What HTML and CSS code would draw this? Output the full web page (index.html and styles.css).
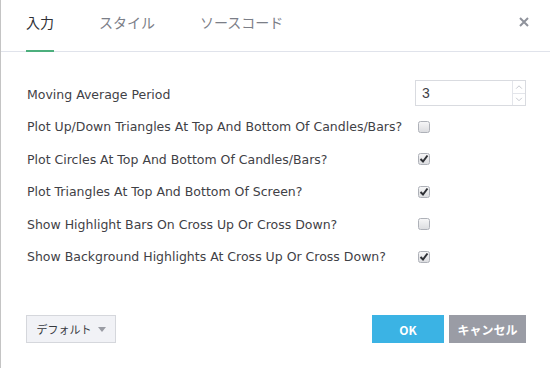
FILE: index.html
```html
<!DOCTYPE html>
<html lang="ja">
<head>
  <meta charset="UTF-8" />
  <title>入力</title>
  <link rel="stylesheet" href="styles.css">
</head>
<body>
  <div class="dialog">
    <div class="tabs">
      <div class="tab active">入力</div>
      <div class="tab">スタイル</div>
      <div class="tab">ソースコード</div>
      <svg class="close" width="10" height="10" viewBox="0 0 10 10">
        <path d="M1 1 L9 9 M9 1 L1 9" stroke="#8f929b" stroke-width="2" fill="none"/>
      </svg>
    </div>

    <div class="props">
      <div class="label">Moving Average Period</div>
      <div class="spin">
        <span class="spin-value">3</span>
        <span class="spin-arrows">
          <svg width="12" height="12" viewBox="0 0 12 12"><path d="M3 8 L6 5 L9 8" stroke="#c3c6cd" fill="none"/></svg>
          <svg width="12" height="12" viewBox="0 0 12 12"><path d="M3 4 L6 7 L9 4" stroke="#c3c6cd" fill="none"/></svg>
        </span>
      </div>

      <div class="label">Plot Up/Down Triangles At Top And Bottom Of Candles/Bars?</div>
      <div><span class="check"></span></div>

      <div class="label">Plot Circles At Top And Bottom Of Candles/Bars?</div>
      <div><span class="check on"><svg width="10" height="10" viewBox="0 0 10 10"><path d="M1.5 5 L4 7.5 L8.5 1.5" stroke="#2f3136" stroke-width="2" fill="none"/></svg></span></div>

      <div class="label">Plot Triangles At Top And Bottom Of Screen?</div>
      <div><span class="check on"><svg width="10" height="10" viewBox="0 0 10 10"><path d="M1.5 5 L4 7.5 L8.5 1.5" stroke="#2f3136" stroke-width="2" fill="none"/></svg></span></div>

      <div class="label">Show Highlight Bars On Cross Up Or Cross Down?</div>
      <div><span class="check"></span></div>

      <div class="label">Show Background Highlights At Cross Up Or Cross Down?</div>
      <div><span class="check on"><svg width="10" height="10" viewBox="0 0 10 10"><path d="M1.5 5 L4 7.5 L8.5 1.5" stroke="#2f3136" stroke-width="2" fill="none"/></svg></span></div>
    </div>

    <div class="footer">
      <button class="btn-default">デフォルト <span class="caret"></span></button>
      <div class="actions">
        <button class="btn-ok">OK</button>
        <button class="btn-cancel">キャンセル</button>
      </div>
    </div>
  </div>
</body>
</html>
```

FILE: styles.css
```css
body {
  margin: 0;
  background: #ffffff;
  font-family: "DejaVu Sans", Tahoma, sans-serif;
}

.dialog {
  width: 549px;
  height: 368px;
  border-left: 1px solid #c4c4c4;
  display: flex;
  flex-direction: column;
}

.tabs {
  height: 51px;
  border-bottom: 1px solid #e0e3eb;
  display: flex;
  align-items: stretch;
  padding-left: 25px;
  gap: 45px;
  position: relative;
}

.tab {
  font-family: "Noto Sans CJK JP", sans-serif;
  font-size: 14px;
  color: #7b7e87;
  display: flex;
  align-items: center;
  padding-bottom: 6px;
  box-sizing: border-box;
  border-bottom: 2px solid transparent;
  margin-bottom: -1px;
}

.tab.active {
  color: #2f3136;
  border-bottom-color: #4caf7d;
}

.close {
  position: absolute;
  right: 21px;
  top: 17px;
}

.props {
  display: grid;
  grid-template-columns: 388px 111px;
  grid-auto-rows: 32.5px;
  align-items: center;
  padding: 26px 0 0 26px;
}

.label {
  font-size: 12.5px;
  color: #3f4146;
}

.spin {
  height: 26px;
  box-sizing: border-box;
  border: 1px solid #d9dbe0;
  display: flex;
  margin-top: -2px;
}

.spin-value {
  flex: 1;
  padding-left: 6px;
  font-family: "Liberation Sans", sans-serif;
  font-size: 14px;
  line-height: 24px;
  color: #3f4146;
}

.spin-arrows {
  width: 12px;
  border-left: 1px solid #e3e5ea;
  display: flex;
  flex-direction: column;
}

.spin-arrows svg {
  display: block;
}

.spin-arrows svg + svg {
  border-top: 1px solid #e3e5ea;
}

.check {
  width: 12px;
  height: 12px;
  box-sizing: border-box;
  margin-left: 3px;
  border: 1px solid #aeb1b8;
  border-radius: 2.5px;
  background: linear-gradient(#f6f6f7, #dcdde0);
  display: flex;
  align-items: center;
  justify-content: center;
}

.footer {
  margin-top: auto;
  display: flex;
  justify-content: space-between;
  padding: 0 24px 25px 25px;
}

.footer button {
  height: 28px;
  border: none;
  font-family: "Noto Sans CJK JP", sans-serif;
  cursor: pointer;
}

.btn-default {
  width: 90px;
  background: #f1f2f6;
  border: 1px solid #d5d7dc !important;
  color: #36383d;
  font-size: 11px;
  display: flex;
  align-items: center;
  justify-content: center;
  gap: 6px;
}

.caret {
  width: 0;
  height: 0;
  border-left: 4px solid transparent;
  border-right: 4px solid transparent;
  border-top: 5px solid #9a9ca4;
}

.actions {
  display: flex;
  gap: 5px;
}

.btn-ok,
.btn-cancel {
  color: #ffffff;
  font-weight: bold;
}

.btn-ok {
  width: 72px;
  background: #3bb3e4;
  font-size: 12px;
}

.btn-cancel {
  width: 77px;
  background: #9a9ca5;
  font-size: 12px;
}
```
